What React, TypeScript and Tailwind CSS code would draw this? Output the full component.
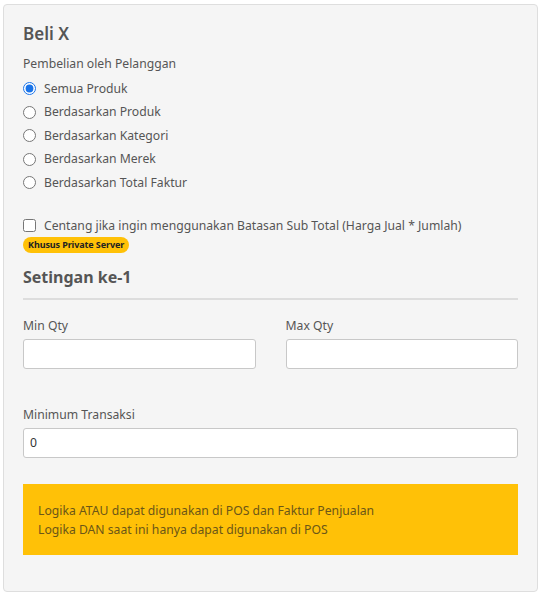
import { useState } from "react";

const scopes = [
  "Semua Produk",
  "Berdasarkan Produk",
  "Berdasarkan Kategori",
  "Berdasarkan Merek",
  "Berdasarkan Total Faktur",
];

export default function App() {
  const [scope, setScope] = useState(scopes[0]);
  const [useSubTotal, setUseSubTotal] = useState(false);

  return (
    <div className="min-h-[594px] bg-white p-[3px] pt-[4px] font-['Noto_Sans',sans-serif] text-[12.2px] text-[#555]">
      <div className="rounded-[4px] border border-[#dedede] bg-[#f5f5f5] px-[19px] pb-[36px] pt-[15px]">
        <h2 className="text-[17px] font-semibold leading-[28px] text-[#555]">Beli X</h2>

        <div className="mt-[7px] leading-[18px]">Pembelian oleh Pelanggan</div>
        <div className="mt-[4px] flex flex-col">
          {scopes.map((s) => (
            <label key={s} className="flex h-[23.5px] items-center gap-[8px]">
              <input
                type="radio"
                name="scope"
                checked={scope === s}
                onChange={() => setScope(s)}
                className="m-0 h-[13px] w-[13px] accent-[#1a73e8]"
              />
              <span>{s}</span>
            </label>
          ))}
        </div>

        <label className="mt-[22px] flex items-center gap-[8px] leading-[18px]">
          <input
            type="checkbox"
            checked={useSubTotal}
            onChange={(e) => setUseSubTotal(e.target.checked)}
            className="m-0 h-[13px] w-[13px]"
          />
          <span>Centang jika ingin menggunakan Batasan Sub Total (Harga Jual * Jumlah)</span>
        </label>
        <span className="mt-[2px] inline-block rounded-full bg-[#ffc107] px-[5px] text-[9px] font-bold leading-[16px] tracking-[-0.1px] text-[#222]">
          Khusus Private Server
        </span>

        <h3 className="mt-[12px] text-[16px] font-bold leading-[24px] text-[#555]">Setingan ke-1</h3>
        <div className="mt-[9px] h-[2px] bg-[#dddddd]" />

        <div className="mt-[17px] grid grid-cols-2 gap-[30px]">
          <div>
            <div className="leading-[18px]">Min Qty</div>
            <input className="mt-[4px] h-[30px] w-full rounded-[3px] border border-[#c8c8c8] bg-white px-[6px]" />
          </div>
          <div>
            <div className="leading-[18px]">Max Qty</div>
            <input className="mt-[4px] h-[30px] w-full rounded-[3px] border border-[#c8c8c8] bg-white px-[6px]" />
          </div>
        </div>

        <div className="mt-[37px] leading-[18px]">Minimum Transaksi</div>
        <input
          defaultValue="0"
          className="mt-[4px] h-[30px] w-full rounded-[3px] border border-[#c8c8c8] bg-white px-[6px] text-[#333]"
        />

        <div className="mt-[26px] bg-[#ffc107] px-[15px] pb-[16px] pt-[17px] leading-[19px] text-[#6b5618]">
          <div>Logika ATAU dapat digunakan di POS dan Faktur Penjualan</div>
          <div>Logika DAN saat ini hanya dapat digunakan di POS</div>
        </div>
      </div>
    </div>
  );
}
